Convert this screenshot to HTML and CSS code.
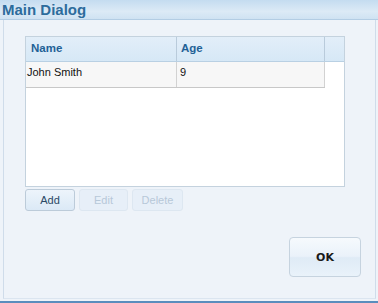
FILE: index.html
```html
<!DOCTYPE html>
<html>
<head>
<meta charset="utf-8">
<link rel="stylesheet" href="styles.css">
</head>
<body>
<div class="window">
  <div class="titlebar">Main Dialog</div>
  <div class="frame">
    <div class="client">
      <div class="grid">
        <div class="head">
          <div class="hcell c-name">Name</div>
          <div class="hcell c-age">Age</div>
          <div class="hfill"></div>
        </div>
        <div class="row">
          <div class="cell c-name">John Smith</div>
          <div class="cell c-age">9</div>
        </div>
      </div>
      <div class="actions">
        <button class="btn b-add">Add</button>
        <button class="btn b-edit" disabled>Edit</button>
        <button class="btn b-del" disabled>Delete</button>
      </div>
      <div class="footer">
        <button class="ok">OK</button>
      </div>
    </div>
  </div>
</div>
</body>
</html>
```
FILE: styles.css
```css
html, body {
  margin: 0;
  padding: 0;
  background: #eef3f9;
}
.window {
  width: 378px;
  height: 303px;
  display: flex;
  flex-direction: column;
  font-family: "Liberation Sans", Arial, sans-serif;
  background: #eef3f9;
  box-sizing: border-box;
  border-bottom: 2px solid #5a8dbd;
  overflow: hidden;
}
.titlebar {
  height: 20px;
  box-sizing: border-box;
  padding-left: 2px;
  line-height: 20px;
  font-size: 15px;
  font-weight: bold;
  color: #2d6c9c;
  background: linear-gradient(#c4dcf0, #dceaf6 60%, #cfe2f2);
  border-bottom: 1px solid #b3cde4;
}
.frame {
  flex: 1;
  display: flex;
  padding-left: 3px;
  padding-right: 2px;
  padding-bottom: 2px;
  background: #eef3f9;
}
.client {
  flex: 1;
  border-left: 1px solid #cfdcea;
  border-right: 1px solid #cfdcea;
  border-bottom: 1px solid #dbe5f0;
  background: #eef3f9;
  padding-left: 21px;
  display: flex;
  flex-direction: column;
}
.grid {
  margin-top: 16px;
  width: 320px;
  height: 151px;
  box-sizing: border-box;
  background: #ffffff;
  border: 1px solid #c4d2de;
}
.head {
  display: flex;
  height: 24px;
  background: linear-gradient(#e2eef9, #d6e8f6);
  border-bottom: 1px solid #b9d0e3;
}
.hcell {
  font-size: 11.5px;
  font-weight: bold;
  color: #1f6196;
  line-height: 23px;
  box-sizing: border-box;
  border-right: 1px solid #b9cbdb;
}
.c-name {
  width: 151px;
  padding-left: 5px;
}
.c-age {
  width: 148px;
  padding-left: 4px;
}
.hfill {
  flex: 1;
}
.row {
  display: flex;
  width: 299px;
  height: 26px;
  box-sizing: border-box;
  background: #f7f7f7;
  border-bottom: 1px solid #c8c8c8;
}
.cell {
  font-size: 11px;
  color: #111;
  line-height: 20px;
  box-sizing: border-box;
  border-right: 1px solid #d2d2d2;
}
.row .c-name {
  padding-left: 1px;
}
.row .c-age {
  padding-left: 3px;
}
.actions {
  display: flex;
  gap: 4px;
  margin-top: 2px;
}
.btn {
  height: 22px;
  box-sizing: border-box;
  font-family: "Liberation Sans", Arial, sans-serif;
  font-size: 11px;
  border-radius: 3px;
  padding: 0;
  line-height: 20px;
}
.b-add {
  width: 50px;
  color: #2a4966;
  background: linear-gradient(#edf4fb, #dbe9f6);
  border: 1px solid #bccbd9;
}
.b-edit {
  width: 49px;
  color: #b7c8d8;
  background: #e7eff8;
  border: 1px solid #dde7f1;
}
.b-del {
  width: 51px;
  color: #b7c8d8;
  background: #e7eff8;
  border: 1px solid #dde7f1;
}
.footer {
  display: flex;
  justify-content: flex-end;
  padding-right: 14px;
  margin-top: 26px;
}
.ok {
  width: 72px;
  height: 40px;
  box-sizing: border-box;
  border: 1px solid #c6d3df;
  border-radius: 4px;
  background: linear-gradient(#f6fafd, #eaf2fa 48%, #dfebf6 52%, #e9f2fa);
  font-family: "DejaVu Sans", sans-serif;
  font-size: 11px;
  font-weight: bold;
  color: #1a1a1a;
  padding: 0;
}
```
